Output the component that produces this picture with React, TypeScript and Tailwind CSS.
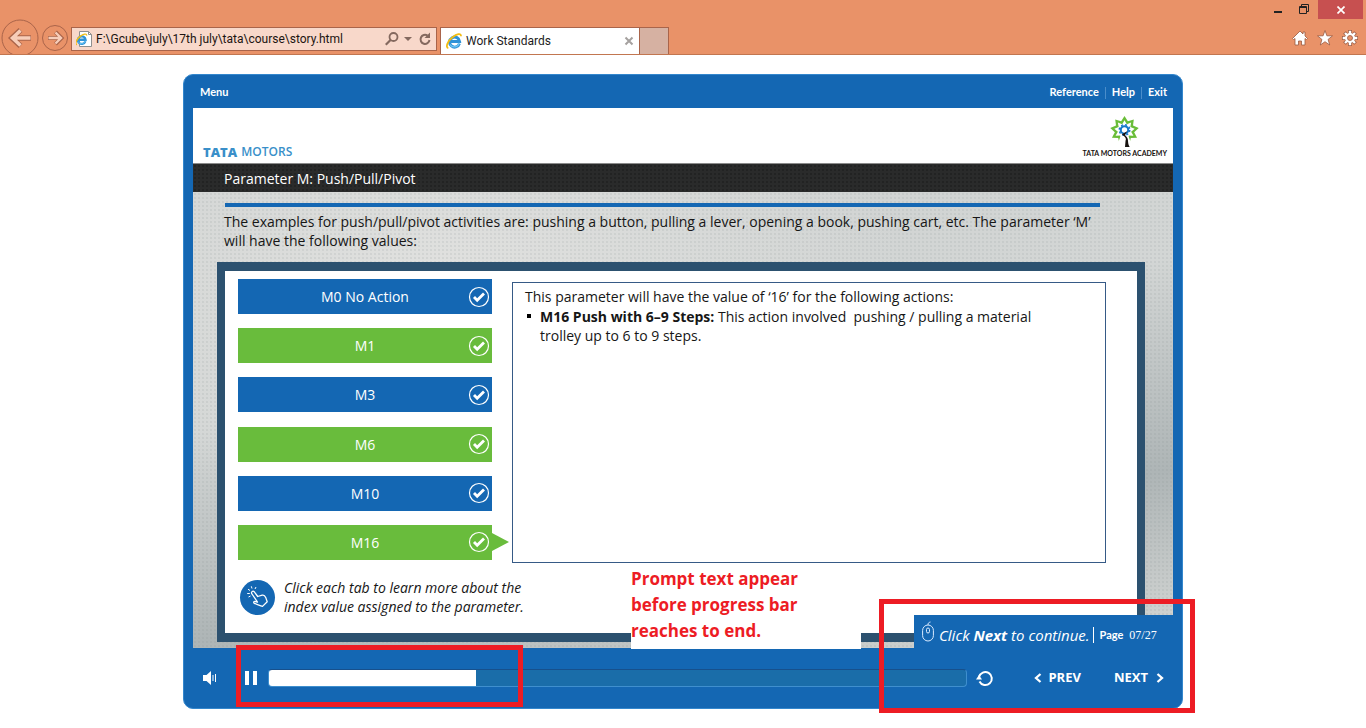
import { useState } from "react";

const tabs = [
  { label: "M0 No Action", green: false },
  { label: "M1", green: true },
  { label: "M3", green: false },
  { label: "M6", green: true },
  { label: "M10", green: false },
  { label: "M16", green: true },
];

function IeGlyph({ page = false }: { page?: boolean }) {
  return (
    <svg viewBox="0 0 16 16" className="h-4 w-4 shrink-0" aria-hidden="true">
      {page && <path d="M3.500.5h9l3 3v12h-12z" fill="#fff" stroke="#8f8f8f" />}
      {page && <path d="M12.500.5v3h3" fill="none" stroke="#8f8f8f" />}
      <g transform={page ? "translate(-.8 2.200) scale(.76)" : undefined}>
        <path d="M13.400 10.600A5 5 0 1 1 13.600 8.600H5" fill="none" stroke="#2f93d8" strokeWidth="3" />
        <path d="M13.200 9.800A5 5 0 0 1 4 11.500" fill="none" stroke="#6cc5f2" strokeWidth="1.200" />
        <path d="M2.300 15C-.8 14.500 1.500 8 6.500 4.200 10.500 1.200 15.300-.4 15 3.200" fill="none" stroke="#f3bd13" strokeWidth="1.800" />
      </g>
    </svg>
  );
}

function BrowserBar() {
  return (
    <header className="relative flex h-[55px] items-end overflow-hidden border-b border-[#c27650] bg-[#e99268]">
      <button aria-label="Back" className="ml-[1px] h-[35px] w-[38px] shrink-0">
        <svg viewBox="0 0 38 35" className="h-full w-full" fill="none">
          <circle cx="19" cy="19" r="18" stroke="#a9644a" />
          <path d="M30 19H12M19.500 11 11 19l8.500 8" stroke="#a9644a" strokeWidth="5.500" />
          <path d="M29.500 19H12M19.500 11.500 11.500 19l8 7.500" stroke="#f7cdb9" strokeWidth="3.500" />
        </svg>
      </button>
      <button aria-label="Forward" className="ml-[3px] h-[29px] w-[26px] shrink-0">
        <svg viewBox="0 0 26 29" className="h-full w-full" fill="none">
          <circle cx="13" cy="13" r="12.500" stroke="#a9644a" />
          <path d="M6 13h13M13.500 7l6 6-6 6" stroke="#a9644a" strokeWidth="4" />
          <path d="M6.500 13h12M13.500 7.500l5.500 5.500-5.500 5.500" stroke="#f7cdb9" strokeWidth="2.400" />
        </svg>
      </button>
      <div className="mb-[3px] ml-[3px] flex h-6 w-[366px] shrink-0 items-center border border-[#a9644a] bg-[#f8d8ca] pr-1 pl-[4px]">
        <IeGlyph page />
        <input
          aria-label="Address"
          defaultValue="F:\Gcube\july\17th july\tata\course\story.html"
          className="ml-1 min-w-0 flex-1 bg-transparent font-[Roboto,sans-serif] text-[12px] text-[#1c1411] outline-none"
        />
        <button aria-label="Search">
          <svg viewBox="0 0 14 14" className="h-3.5 w-3.5" fill="none" stroke="#84695f" strokeWidth="1.800">
            <circle cx="8.500" cy="5" r="4" />
            <path d="M5.500 8 .8 12.800" strokeWidth="2.200" />
          </svg>
        </button>
        <button aria-label="Address history" className="ml-[5px]">
          <svg viewBox="0 0 8 4" className="h-1 w-2"><path d="M0 0h8L4 4z" fill="#84695f" /></svg>
        </button>
        <button aria-label="Refresh" className="ml-[6px]">
          <svg viewBox="0 0 14 14" className="h-3.5 w-3.5" fill="none">
            <path d="M9.500 3.600A4.500 4.500 0 1 0 11.500 8" stroke="#84695f" strokeWidth="2" />
            <path d="M6.500 6h5.500V.5z" fill="#84695f" />
          </svg>
        </button>
      </div>
      <div className="ml-[3px] flex h-[27px] w-[200px] shrink-0 items-center border border-b-0 border-[#a9644a] bg-white pr-[5px] pl-[5px]">
        <IeGlyph />
        <span className="ml-[4px] flex-1 font-[Roboto,sans-serif] text-[12px] text-[#1c1c1c]">Work Standards</span>
        <button aria-label="Close tab">
          <svg viewBox="0 0 10 10" className="h-2.5 w-2.5" stroke="#a5a19f" strokeWidth="2"><path d="m1.500 1.500 7 7M8.500 1.500l-7 7" /></svg>
        </button>
      </div>
      <button aria-label="New tab" className="h-[27px] w-[29px] shrink-0 border border-b-0 border-l-0 border-[#a9644a] bg-[#d6b1a2]" />
      <div className="flex h-full flex-1 flex-col items-end">
        <div className="flex h-[19px] items-start pr-[3px]">
          <button aria-label="Minimize" className="flex h-[19px] w-[24px] justify-center">
            <svg viewBox="0 0 8 14" className="h-3.5 w-2"><path d="M0 11h8v2H0z" fill="#222" /></svg>
          </button>
          <button aria-label="Restore" className="flex h-[19px] w-[28px] justify-center pt-1">
            <svg viewBox="0 0 10 10" className="h-2.5 w-2.5" fill="none" stroke="#222">
              <path d="M.5 2.500h7v7h-7zM.5 3.500h7M2.500 2.500v-2h7v7h-2" />
            </svg>
          </button>
          <button aria-label="Close" className="flex h-[19px] w-[45px] items-center justify-center bg-[#c75050]">
            <svg viewBox="0 0 8 8" className="h-2 w-2" stroke="#fff" strokeWidth="1.700"><path d="m.5.5 7 7M7.500.5l-7 7" /></svg>
          </button>
        </div>
        <div className="flex gap-[9px] pt-[11px] pr-[8px]">
          <button aria-label="Home">
            <svg viewBox="0 0 16 16" className="h-4 w-4" fill="#fff" stroke="#985a43" strokeWidth=".8">
              <path d="M8 1 .5 8.500l1 1L3 8.500V15h3.500v-4h3v4H13V8.500l1.500 1 1-1L13 6V2h-2v2z" />
            </svg>
          </button>
          <button aria-label="Favorites">
            <svg viewBox="0 0 16 16" className="h-4 w-4" fill="#fff" stroke="#985a43" strokeWidth=".8">
              <path d="m8 .5 1.900 5.300 5.600.1-4.400 3.500 1.600 5.600L8 11.700 3.300 15l1.600-5.600L.5 5.900l5.600-.1z" />
            </svg>
          </button>
          <button aria-label="Tools">
            <svg viewBox="0 0 16 16" className="h-4 w-4">
              <g stroke="#985a43" strokeWidth="3.800"><path d="M8 0v16M0 8h16M2.500 2.500l11 11M13.500 2.500l-11 11" /></g>
              <g stroke="#fff" strokeWidth="2.400"><path d="M8 .7v14.600M.7 8h14.600M3 3l10 10M13 3 3 13" /></g>
              <circle cx="8" cy="8" r="5" fill="#fff" />
              <circle cx="8" cy="8" r="2.500" fill="#e99268" stroke="#985a43" strokeWidth=".8" />
            </svg>
          </button>
        </div>
      </div>
    </header>
  );
}

function star(outer: number, inner: number) {
  return Array.from({ length: 18 }, (_, i) => {
    const r = i % 2 ? inner : outer;
    const a = (i * Math.PI) / 9 - Math.PI / 2;
    return `${15 + r * Math.cos(a)},${14 + r * Math.sin(a)}`;
  }).join(" ");
}

function AcademyLogo() {
  return (
    <svg viewBox="0 0 30 30" className="h-[31px] w-[31px]" aria-hidden="true">
      <polygon points={star(14, 9.5)} fill="#69bd38" />
      <polygon points={star(10, 6.5)} fill="#fff" />
      <path d="M11 20h8l3 8H8z" fill="#fff" />
      <circle cx="15" cy="13.500" r="3.600" fill="#fff" stroke="#1679ca" strokeWidth="2" />
      <circle cx="15" cy="13.500" r="5.100" fill="none" stroke="#1679ca" strokeWidth="1.400" strokeDasharray="2 2" />
      <path d="M18 14.500l-5.500 3.200c1.500 1.600 5 3.300 3.500 6.300L15.500 30H20c-2.300-3.600-.9-6.600-2.500-9.100-1-1.500-2.200-2.400-2-3z" fill="#17120f" />
    </svg>
  );
}

function CheckBadge() {
  return (
    <svg viewBox="0 0 22 22" className="absolute right-[2px] h-[22px] w-[22px]" fill="none" stroke="#fff" aria-hidden="true">
      <circle cx="11" cy="11" r="9.500" strokeWidth="1.200" />
      <path d="m6 11 3.200 3.300L16 7.500" strokeWidth="2.800" />
    </svg>
  );
}

function Slide() {
  const [active, setActive] = useState(5);
  return (
    <section className="relative mx-[9px] bg-[#c3c8c8] bg-[radial-gradient(circle,#7f8b8b22_1px,transparent_1px),radial-gradient(ellipse_at_25%_30%,#e4e4e2cc_0%,transparent_45%),linear-gradient(170deg,#cdd0cf_0%,#d3d6d5_45%,#aeb5b6_75%,#d6d8d6_100%)] bg-[size:4px_4px,auto,auto]">
      <div className="flex h-[55px] items-end justify-between bg-white pr-[6px] pb-1 pl-[10px]">
        <div className="flex items-end gap-1 text-[#398fc9]">
          <span className="text-[13px] leading-[14px] font-extrabold">TATA</span>
          <span className="text-[12px] leading-[14px] font-semibold">MOTORS</span>
        </div>
        <div className="flex flex-col items-center">
          <AcademyLogo />
          <span className="font-[Lato,sans-serif] text-[7px] leading-[12px] font-bold whitespace-nowrap text-[#17120f]">
            TATA MOTORS ACADEMY
          </span>
        </div>
      </div>
      <h1 className="h-[29px] border-t border-[#8b8b8b] bg-[#2a2b2b] bg-[radial-gradient(circle,#222323_1px,transparent_1px)] bg-[size:4px_4px] pl-[31px] text-[14px] leading-[30px] text-white">
        Parameter M: Push/Pull/Pivot
      </h1>
      <div className="px-[24px] pt-[11px] pb-[6px]">
        <div className="mr-[49px] ml-[8px] h-1 bg-[#1467b3]" />
        <p className="mt-[5px] ml-[7px] text-[14px] leading-[19px]">
          The examples for push/pull/pivot activities are: pushing a button, pulling a lever, opening a book, pushing cart, etc. The parameter ‘M’
          <br />
          will have the following values:
        </p>
        <div className="mt-[12px] mr-[4px] border-x-[8px] border-y-[9px] border-[#2c516f] bg-white pt-[8px] pr-[31px] pb-[17px] pl-[13px]">
          <div className="flex gap-5">
            <div className="flex h-[281px] w-[254px] shrink-0 flex-col justify-between">
              {tabs.map((tab, i) => (
                <button
                  key={tab.label}
                  onClick={() => setActive(i)}
                  className={`relative flex h-[35px] items-center justify-center text-[14px] text-white ${tab.green ? "bg-[#69bc3c]" : "bg-[#1467b3]"}`}
                >
                  {tab.label}
                  <CheckBadge />
                  {active === i && (
                    <svg viewBox="0 0 17 18" className="absolute left-full h-[18px] w-[17px]" aria-hidden="true">
                      <path d="M0 0v18l17-9z" fill="#69bc3c" />
                    </svg>
                  )}
                </button>
              ))}
            </div>
            <div className="mt-[3px] h-[281px] flex-1 border border-[#365a86] px-3 pt-1 text-[14px] leading-[19px]">
              <p>This parameter will have the value of ‘16’ for the following actions:</p>
              <ul className="mt-px">
                <li className="flex">
                  <span className="mt-[7px] mr-[9px] ml-[2px] h-1 w-1 shrink-0 bg-black" />
                  <span>
                    <b>M16 Push with 6–9 Steps:</b> This action involved&nbsp; pushing / pulling a material
                    <br />
                    trolley up to 6 to 9 steps.
                  </span>
                </li>
              </ul>
            </div>
          </div>
          <div className="mt-[15px] flex items-center gap-[9px] pl-[2px]">
            <span className="flex h-[35px] w-[35px] items-center justify-center rounded-full bg-[#1467b3]">
              <svg viewBox="0 0 24 24" className="h-6 w-6" fill="none" stroke="#fff" strokeWidth="1.300" strokeLinejoin="round" aria-hidden="true">
                <path d="M6.200 6.500c1-.8 2 0 2.500.8l3 4.200 4.500-1.300c2-.5 2.600.2 3.500 2.200l1.500 4.300-4.700 4.700c-3-1-6-1.800-8.500-3.300-.8-1 .2-2 1.300-1.600l2.200.5L6 9c-.8-1-.6-2 .2-2.500z" />
                <path d="M4.500 11 2.500 12M3.800 8.500H1.200M4 5.500l-2-1.300M6 3.500 5.300 1.300M9 4l1-2" strokeWidth="1" />
              </svg>
            </span>
            <p className="text-[14px] leading-[19px] italic">
              Click each tab to learn more about the
              <br />
              index value assigned to the parameter.
            </p>
          </div>
        </div>
      </div>
      <div className="absolute right-0 bottom-0 flex h-[33px] w-[259px] items-center bg-[#1467b3] pt-[7px] pl-[8px] text-white">
        <svg viewBox="0 0 12 21" className="-mt-2 h-[21px] w-3" fill="none" stroke="#d8eaff" aria-hidden="true">
          <rect x=".6" y="4" width="10.800" height="16" rx="5.400" />
          <path d="M6 4c0-2 .5-2.500 2.500-3" />
          <rect x="4.500" y="7" width="3" height="5" rx="1.500" />
        </svg>
        <p className="ml-[5px] text-[15px] italic">Click <b>Next</b> to continue.</p>
        <span className="mr-[6px] ml-[3px] h-4 w-px bg-white" />
        <span className="font-[Lato,sans-serif] text-[11px] font-bold">Page</span>
        <span className="ml-[6px] font-['Liberation_Serif',serif] text-[12px]">07/27</span>
      </div>
    </section>
  );
}

function PlayerControls() {
  const [value, setValue] = useState(297);
  const pct = value / 10;
  return (
    <footer className="flex h-[60px] items-center pr-[18px] pl-[19px] text-white">
      <button aria-label="Volume">
        <svg viewBox="0 0 14 16" className="h-4 w-3.5" fill="#fff">
          <path d="M0 5h3.500L8 1v14l-4.500-4H0z" />
          <path d="M9.500 5h1v6h-1zM12 4h1v8h-1z" />
        </svg>
      </button>
      <button aria-label="Pause" className="ml-[28px] flex gap-1">
        <span className="h-[14px] w-1 bg-white" />
        <span className="h-[14px] w-1 bg-white" />
      </button>
      <input
        type="range"
        min={0}
        max={1000}
        value={value}
        onChange={(e) => setValue(Number(e.target.value))}
        aria-label="Progress"
        className="ml-[11px] h-[18px] min-w-0 flex-1 appearance-none rounded-[4px] border border-[#3f8fce] border-t-[#17508c] [&::-webkit-slider-thumb]:opacity-0"
        style={{ background: `linear-gradient(to right, #fff ${pct}%, #1a6da9 ${pct}%)` }}
      />
      <button aria-label="Replay" className="ml-[9px]">
        <svg viewBox="0 0 18 18" className="h-[18px] w-[18px]" fill="none">
          <path d="M3.500 12.500A6.500 6.500 0 1 0 3 8" stroke="#fff" strokeWidth="2" />
          <path d="M0 10.500h6L3 6z" fill="#fff" />
        </svg>
      </button>
      <button className="ml-[40px] flex items-center gap-[6px] text-[13px] font-bold">
        <svg viewBox="0 0 8 10" className="h-2.5 w-2" fill="none" stroke="#fff" strokeWidth="2.300"><path d="M6.500 1 2 5l4.500 4" /></svg>
        PREV
      </button>
      <button className="ml-[33px] flex items-center gap-2 text-[13px] font-bold">
        NEXT
        <svg viewBox="0 0 8 10" className="h-2.5 w-2" fill="none" stroke="#fff" strokeWidth="2.300"><path d="M1.500 1 6 5 1.500 9" /></svg>
      </button>
    </footer>
  );
}

export default function App() {
  return (
    <div className="min-h-screen overflow-x-hidden bg-white font-['Open_Sans',sans-serif] text-[#161616]">
      <BrowserBar />
      <main className="relative mx-auto mt-[19px] w-full max-w-[1000px] rounded-[10px] border border-[#3487cd] bg-[#1467b3]">
        <nav className="flex h-[33px] items-center justify-between pt-[2px] pr-[15px] pl-4 font-[Lato,sans-serif] text-[11px] font-bold text-white">
          <a href="#menu">Menu</a>
          <div className="flex items-center">
            <a href="#reference">Reference</a>
            <span className="mx-[6px] h-3 w-px bg-[#4a8dca]" />
            <a href="#help">Help</a>
            <span className="mx-[6px] h-3 w-px bg-[#4a8dca]" />
            <a href="#exit">Exit</a>
          </div>
        </nav>
        <Slide />
        <PlayerControls />
        <p className="absolute top-[491px] left-[447px] h-[83px] w-[230px] bg-white text-[17px] leading-[26px] font-bold text-[#ed1c24]">
          Prompt text appear
          <br />
          before progress bar
          <br />
          reaches to end.
        </p>
        <div className="pointer-events-none absolute top-[570px] left-[52px] h-[62px] w-[287px] border-[5px] border-[#ed1c24]" />
        <div className="pointer-events-none absolute top-[524px] left-[695px] h-[114px] w-[316px] border-[5px] border-[#ed1c24]" />
      </main>
    </div>
  );
}
